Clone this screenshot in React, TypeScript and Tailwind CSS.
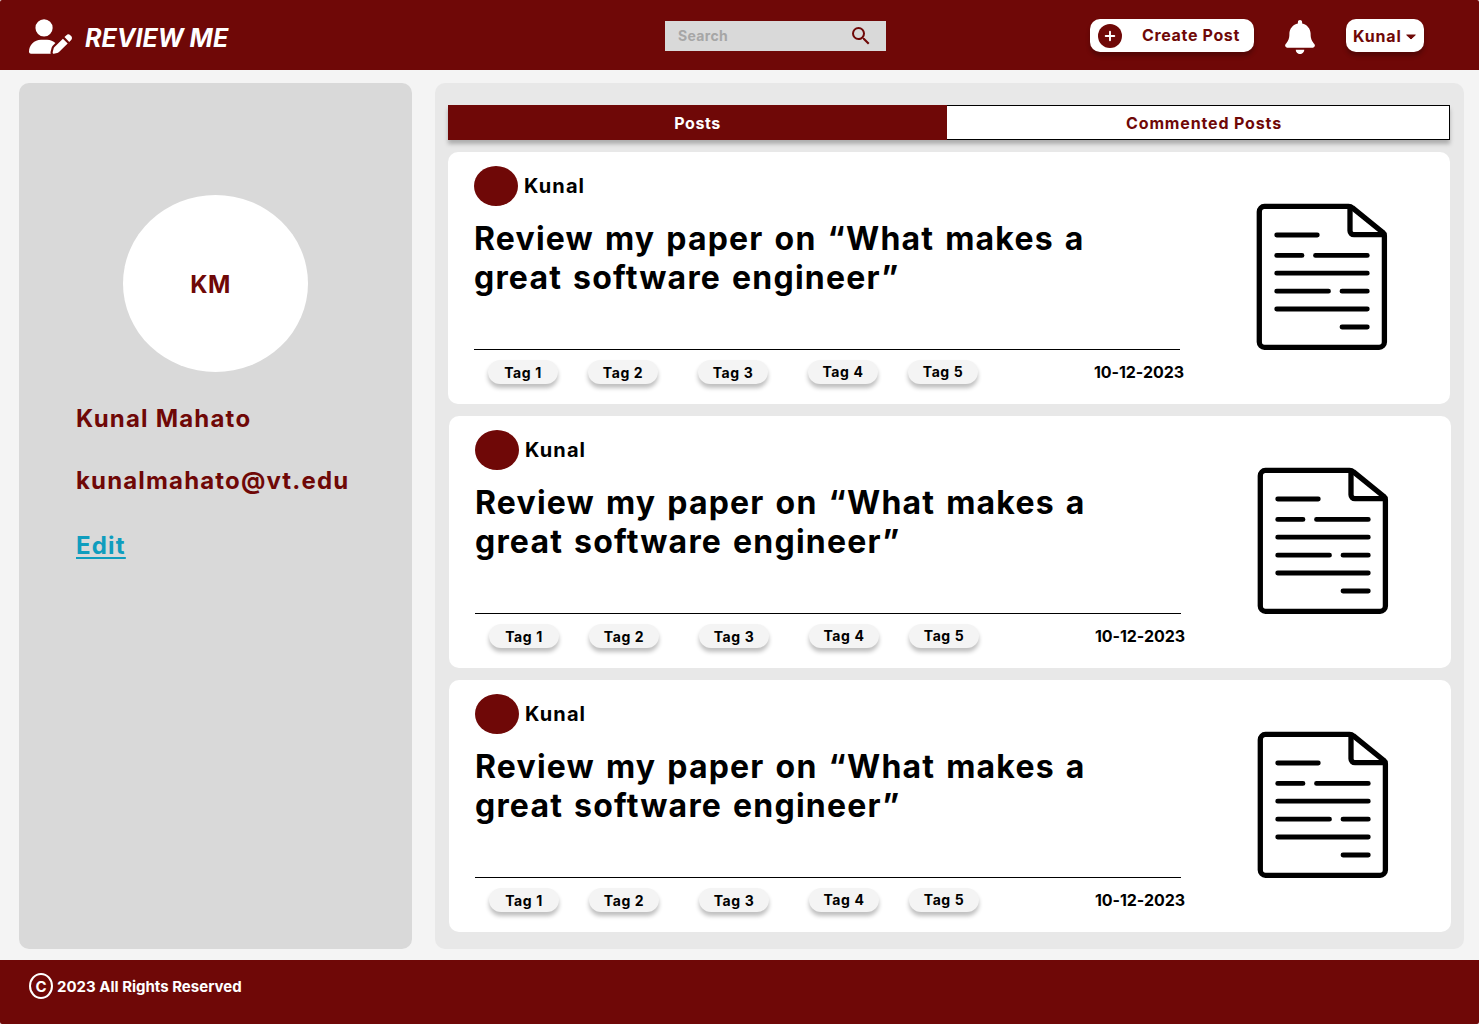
import React from "react";
import { FaBell, FaUserPen } from "react-icons/fa6";
import { MdSearch } from "react-icons/md";

const tags = [
  { label: "Tag 1", gap: "ml-3.5", text: "pt-px" },
  { label: "Tag 2", gap: "ml-[30px]", text: "pt-px" },
  { label: "Tag 3", gap: "ml-10", text: "pt-px" },
  { label: "Tag 4", gap: "ml-10", text: "pb-px" },
  { label: "Tag 5", gap: "ml-[30px]", text: "pb-px" },
];

const posts = [
  { id: 1, offset: "" },
  { id: 2, offset: "translate-x-px" },
  { id: 3, offset: "translate-x-px" },
];

function PaperIcon() {
  return (
    <svg
      viewBox="0 0 132 148"
      fill="none"
      stroke="currentColor"
      strokeLinecap="round"
      strokeLinejoin="round"
      className="h-[148px] w-[132px] shrink-0"
    >
      <path
        strokeWidth="5.3"
        d="M8.500 3.400H92.500a6 6 0 0 1 4 1.500L126.600 29.200a4.500 4.500 0 0 1 1.800 3.600V139a5.300 5.300 0 0 1-5.300 5.300H8.500A5.300 5.300 0 0 1 3.300 139V8.700A5.300 5.300 0 0 1 8.500 3.400Z"
      />
      <path strokeWidth="5.3" d="M94 4.500V27.700a4 4 0 0 0 4 4H127" />
      <path
        strokeWidth="4.8"
        d="M20.700 32H61.300M20.700 52.400H46M59.500 52.400H111.300M20.700 70.200H111.300M20.700 88.200H72.500M86 88.200H111.300M20.700 106H111.300M86 124H111.300"
      />
    </svg>
  );
}

function PostCard({ offset }: { offset: string }) {
  return (
    <article className={`flex h-[252px] w-[1002px] rounded-[10px] bg-white text-black ${offset}`}>
      <div className="ml-[26px] flex w-[710px] flex-col pt-3.5">
        <div className="flex h-10 items-center">
          <span className="h-10 w-11 rounded-[50%] bg-[#6f0807]" />
          <span className="ml-1.5 text-[20px] font-bold tracking-[1.1px]">Kunal</span>
        </div>
        <h2 className="mt-3 h-[131px] w-[640px] pt-px text-[32px] leading-[39px] font-bold tracking-[1.2px] [word-spacing:2.200px]">
          Review my paper on “What makes a
          <br />
          great software engineer”
        </h2>
        <div className="h-px w-[706px] bg-black" />
        <div className="mt-2.5 flex h-6 items-center">
          {tags.map((tag) => (
            <span
              key={tag.label}
              className={`flex h-6 w-[70px] items-center justify-center rounded-xl bg-[#f4f4f4] text-[14px] leading-none font-bold tracking-[0.6px] shadow-[0_4px_4px_rgba(0,0,0,0.25)] ${tag.gap} ${tag.text}`}
            >
              {tag.label}
            </span>
          ))}
          <span className="ml-auto text-[16px] font-bold tracking-[-0.05px] whitespace-nowrap">10-12-2023</span>
        </div>
      </div>
      <div className="mt-[51px] ml-[72px]">
        <PaperIcon />
      </div>
    </article>
  );
}

export default function App() {
  return (
    <div className="flex h-[1024px] w-[1479px] flex-col overflow-hidden rounded-[2px] bg-[#f4f4f4] font-['Inter',sans-serif] text-[#6f0807]">
      <header className="flex h-[70px] shrink-0 items-start bg-[#6f0807]">
        <FaUserPen className="mt-[19px] ml-[29px] h-[35px] w-[43px] text-white" />
        <span className="mt-[19px] ml-[13px] w-[580px] text-[25px] leading-[38px] font-bold whitespace-nowrap text-white italic">
          REVIEW ME
        </span>
        <div className="mt-[21px] flex h-[30px] w-[221px] items-center justify-between bg-[#d9d9d9] pr-[13px] pl-[13px]">
          <span className="pb-0.5 text-[14px] font-bold tracking-[0.35px] text-[#a6a6a6]">Search</span>
          <MdSearch className="size-6" />
        </div>
        <button className="mt-[19px] ml-[204px] flex h-[33px] w-[164px] items-center rounded-[10px] bg-white pl-2 shadow-[0_4px_4px_rgba(0,0,0,0.25)]">
          <svg viewBox="0 0 24 24" className="mt-px size-6">
            <circle cx="12" cy="12" r="12" fill="currentColor" />
            <path d="M12 7.700v8.600M7.700 12h8.600" stroke="white" strokeWidth="1.9" strokeLinecap="round" />
          </svg>
          <span className="ml-5 pb-0.5 text-[16px] font-bold tracking-[0.65px] whitespace-nowrap">Create Post</span>
        </button>
        <FaBell className="mt-5 ml-[31px] h-[34px] w-[30px] text-white" />
        <button className="mt-[19px] ml-[31px] flex h-[33px] w-[78px] items-center rounded-[10px] bg-white pl-[7px] shadow-[0_4px_4px_rgba(0,0,0,0.25)]">
          <span className="w-[53px] text-left text-[16px] font-bold tracking-[0.8px]">Kunal</span>
          <svg viewBox="0 0 10 6" className="mt-0.5 h-1.5 w-2.5 shrink-0">
            <path d="M0.700 1H9.300L5 5Z" fill="currentColor" stroke="currentColor" strokeLinejoin="round" />
          </svg>
        </button>
      </header>

      <main className="flex h-[890px] shrink-0 pt-[13px] pl-[19px]">
        <aside className="flex h-[866px] w-[393px] flex-col rounded-[10px] bg-[#d9d9d9] pt-28 text-[24px] leading-8 font-bold">
          <div className="ml-[104px] flex h-[177px] w-[185px] items-center justify-center rounded-[50%] bg-white pt-0.5 pr-2.5 tracking-[0.5px]">
            KM
          </div>
          <p className="mt-[31px] ml-[57px] tracking-[1.2px]">Kunal Mahato</p>
          <p className="mt-[30px] ml-[57px] tracking-[1.150px]">kunalmahato@vt.edu</p>
          <a className="mt-[33px] ml-[57px] self-start tracking-[1.2px] text-[#0f9dbe] underline decoration-[1.5px] underline-offset-[3px] [text-decoration-skip-ink:none]">
            Edit
          </a>
        </aside>

        <section className="ml-[23px] h-[866px] w-[1029px] rounded-[10px] bg-[#e8e8e8] pt-[22px] pl-[13px]">
          <div className="flex h-[35px] w-[1002px] text-[16px] font-bold shadow-[0_4px_4px_rgba(0,0,0,0.25)]">
            <div className="flex w-[499px] items-center justify-center bg-[#6f0807] tracking-[0.6px] text-white">
              Posts
            </div>
            <div className="flex w-[503px] items-center justify-center border border-l-0 border-black bg-white pl-3 tracking-[0.85px]">
              Commented Posts
            </div>
          </div>
          <div className="mt-3 flex flex-col gap-3">
            {posts.map((post) => (
              <PostCard key={post.id} offset={post.offset} />
            ))}
          </div>
        </section>
      </main>

      <footer className="flex h-16 shrink-0 items-start bg-[#6f0807] pt-[13px] pl-[29px] text-white">
        <span className="flex h-[26px] w-6 items-center justify-center rounded-[50%] border-2 border-white text-[15px] leading-none font-bold">
          C
        </span>
        <span className="ml-1 text-[15px] leading-[27px] font-bold">2023 All Rights Reserved</span>
      </footer>
    </div>
  );
}
